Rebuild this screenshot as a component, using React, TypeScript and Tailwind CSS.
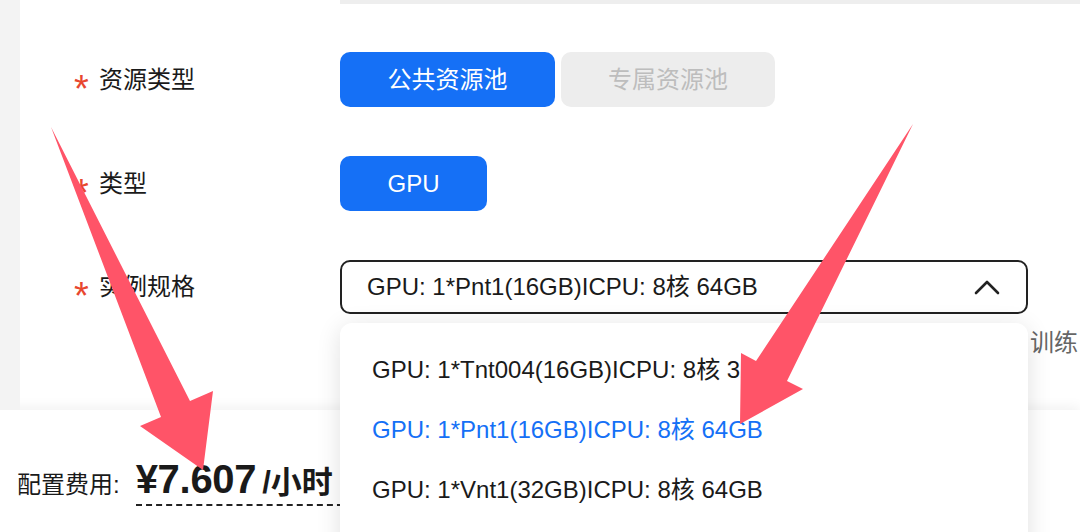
import { useState } from "react";

const specOptions = [
  "GPU: 1*Tnt004(16GB)ICPU: 8核 32GB",
  "GPU: 1*Pnt1(16GB)ICPU: 8核 64GB",
  "GPU: 1*Vnt1(32GB)ICPU: 8核 64GB",
];

const FieldLabel = ({ text }: { text: string }) => (
  <div className="flex w-[320px] shrink-0 items-center gap-[10px] pl-[54px] text-[24px]">
    <span className="relative top-[9px] w-[15px] text-[38px] leading-none text-[#e8472f]">*</span>
    <span>{text}</span>
  </div>
);

const App = () => {
  const [pool, setPool] = useState("public");
  const [spec, setSpec] = useState(specOptions[1]);

  return (
    <div className="relative h-[532px] w-[1080px] overflow-hidden bg-white font-['Liberation_Sans','Noto_Sans_CJK_SC',sans-serif] text-[#1a1a1a]">
      <div className="flex h-[410px]">
        <div className="w-[20px] shrink-0 bg-[#f3f3f3]" />
        <div className="flex flex-1 flex-col">
          <div className="ml-[320px] h-[4px] bg-[#eeeeee]" />

          <div className="mt-[48px] flex flex-col gap-[49px]">
            <div className="flex h-[55px] items-center">
              <FieldLabel text="资源类型" />
              <div className="flex gap-[6px] text-[24px]">
                <button
                  onClick={() => setPool("public")}
                  className={
                    pool === "public"
                      ? "h-[55px] w-[215px] rounded-[10px] bg-[#1570f6] text-white"
                      : "h-[55px] w-[215px] rounded-[10px] bg-[#ededed] text-[#bdbdbd]"
                  }
                >
                  公共资源池
                </button>
                <button className="h-[55px] w-[214px] rounded-[10px] bg-[#ededed] text-[#bdbdbd]">
                  专属资源池
                </button>
              </div>
            </div>

            <div className="flex h-[55px] items-center">
              <FieldLabel text="类型" />
              <button className="h-[55px] w-[147px] rounded-[10px] bg-[#1570f6] text-[24px] text-white">
                GPU
              </button>
            </div>

            <div className="flex items-start">
              <div className="flex h-[54px] items-center">
                <FieldLabel text="实例规格" />
              </div>
              <div className="flex flex-col">
                <div className="flex h-[54px] w-[688px] items-center justify-between rounded-[10px] border-2 border-[#222] pl-[25px] pr-[26px] text-[24px]">
                  <span>{spec}</span>
                  <svg width="26" height="16" viewBox="0 0 26 16" fill="none">
                    <path d="M2 14 L13 3 L24 14" stroke="#222" strokeWidth="2.6" strokeLinecap="round" strokeLinejoin="round" />
                  </svg>
                </div>
                <div className="mt-[14px] whitespace-nowrap pl-[690px] text-[24px] leading-[30px] text-[#666]">
                  训练
                </div>
              </div>
            </div>
          </div>
        </div>
      </div>

      <footer className="flex h-[122px] items-baseline gap-[16px] bg-white pl-[17px] pt-[49px] shadow-[0_-3px_12px_rgba(0,0,0,0.06)]">
        <span className="text-[24px]">配置费用:</span>
        <span className="flex items-baseline gap-[6px] border-b-2 border-dashed border-[#222] pb-[5px] pr-[20px] font-bold leading-none">
          <span className="text-[40px] tracking-[-0.3px]">¥7.607</span>
          <span className="text-[31px]">/小时</span>
        </span>
      </footer>

      <div className="absolute left-[340px] top-[323px] h-[240px] w-[688px] rounded-[12px] bg-white pt-[17px] shadow-[0_4px_24px_rgba(0,0,0,0.12)]">
        {specOptions.map((opt) => (
          <div
            key={opt}
            onClick={() => setSpec(opt)}
            className={
              opt === spec
                ? "flex h-[60px] items-center px-[32px] text-[24px] text-[#1570f6]"
                : "flex h-[60px] items-center px-[32px] text-[24px] text-[#1a1a1a]"
            }
          >
            {opt}
          </div>
        ))}
      </div>

      {/* annotation arrows */}
      <svg className="pointer-events-none absolute left-0 top-0" width="1080" height="532" viewBox="0 0 1080 532">
        <polygon points="51,127 190,401 213,391 203,470 140,426 161,417" fill="#ff5468" />
        <polygon points="913,124 787,381 803,389 740,424 741,353 756,361" fill="#ff5468" />
      </svg>
    </div>
  );
};

export default App;
